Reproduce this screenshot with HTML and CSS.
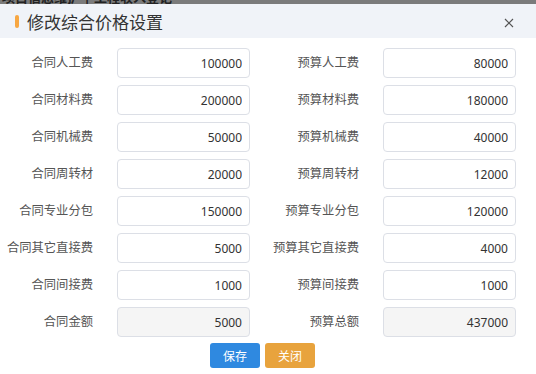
FILE: index.html
```html
<!DOCTYPE html>
<html lang="zh-CN">
<head>
    <meta charset="UTF-8">
    <meta name="viewport" content="width=device-width, initial-scale=1.0">
    <title>修改综合价格设置</title>
    <link rel="stylesheet" href="styles.css">
</head>
<body>
    <div class="backdrop"><span>项目信息维护 | 工程收入登记</span></div>
    <div class="dialog">
        <div class="dialog-header">
            <span class="bar"></span>
            <span class="title">修改综合价格设置</span>
            <svg class="close" width="10" height="10" viewBox="0 0 10 10"><path d="M1 1L9 9M9 1L1 9" stroke="#555" stroke-width="1.2" fill="none"/></svg>
        </div>
        <div class="form">
            <label>合同人工费</label><input type="text" value="100000">
            <label>预算人工费</label><input type="text" value="80000">
            <label>合同材料费</label><input type="text" value="200000">
            <label>预算材料费</label><input type="text" value="180000">
            <label>合同机械费</label><input type="text" value="50000">
            <label>预算机械费</label><input type="text" value="40000">
            <label>合同周转材</label><input type="text" value="20000">
            <label>预算周转材</label><input type="text" value="12000">
            <label>合同专业分包</label><input type="text" value="150000">
            <label>预算专业分包</label><input type="text" value="120000">
            <label>合同其它直接费</label><input type="text" value="5000">
            <label>预算其它直接费</label><input type="text" value="4000">
            <label>合同间接费</label><input type="text" value="1000">
            <label>预算间接费</label><input type="text" value="1000">
            <label>合同金额</label><input type="text" value="5000" disabled>
            <label>预算总额</label><input type="text" value="437000" disabled>
        </div>
        <div class="actions">
            <button class="btn save">保存</button>
            <button class="btn cancel">关闭</button>
        </div>
    </div>
</body>
</html>
```

FILE: styles.css
```css
* { box-sizing: border-box; }
body { margin: 0; background: #fff; font-family: "Noto Sans", "Noto Sans CJK SC", sans-serif; color: #333; }
.backdrop { height: 4px; overflow: hidden; background: #7b7b7b; }
.backdrop span { display: block; margin-top: -10px; padding-left: 2px; font-size: 13px; line-height: 14px; color: #222; font-weight: bold; }
.dialog-header { height: 34px; background: #f0f3f8; display: flex; align-items: center; padding-left: 15px; padding-right: 22px; }
.bar { width: 4px; height: 13px; border-radius: 2px; background: #f7a743; margin-right: 8px; }
.title { font-size: 17px; color: #333; flex: 1; }
.close { display: block; margin-top: 4px; }
.form { display: grid; grid-template-columns: 117px 133px 133px 133px; row-gap: 7px; padding-top: 10px; }
.form label { font-size: 12.3px; color: #555; text-align: right; padding-right: 24px; line-height: 30px; white-space: nowrap; }
.form input { height: 30px; width: 133px; border: 1px solid #dcdfe6; border-radius: 4px; text-align: right; padding: 0 7px; font-family: inherit; font-size: 12px; color: #333; background: #fff; outline: none; }
.form input:disabled { background: #f5f5f5; color: #333; }
.actions { display: flex; gap: 5px; padding-left: 210px; padding-top: 6px; }
.btn { width: 50px; height: 25px; border: none; border-radius: 3px; color: #fff; font-family: inherit; font-size: 12px; cursor: pointer; }
.save { background: #2f89e0; }
.cancel { background: #e8a33d; }
```
